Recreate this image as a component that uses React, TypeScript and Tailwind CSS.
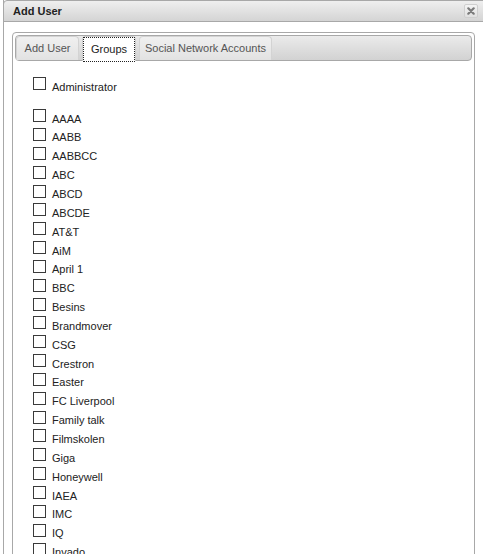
import React from "react";

const groups = [
  "AAAA","AABB","AABBCC","ABC","ABCD","ABCDE","AT&T","AiM","April 1","BBC","Besins","Brandmover","CSG","Crestron","Easter","FC Liverpool","Family talk","Filmskolen","Giga","Honeywell","IAEA","IMC","IQ","Invado",
];

function Row({ label }: { label: string }) {
  return (
    <div className="flex items-start h-[18.85px]">
      <div className="w-[13px] h-[13px] border border-[#3a3a3a] bg-white shrink-0" />
      <span className="ml-[6px] mt-[3.5px] leading-[13px] text-[11px] text-[#222] whitespace-nowrap">{label}</span>
    </div>
  );
}

export default function App() {
  return (
    <div
      className="w-[483px] h-[554px] overflow-hidden bg-white relative"
      style={{ fontFamily: '"Liberation Sans", Arial, sans-serif' }}
    >
      <div className="ml-[3px] w-[490px] h-[554px] border-l border-[#a8a8a8]">
        <div className="h-[22px] -ml-px border border-[#a8a8a8] rounded-tl-[4px] bg-gradient-to-b from-[#efefef] to-[#d4d4d4] flex items-center relative">
          <span className="ml-[9px] text-[11px] font-bold text-[#222]">Add User</span>
          <div className="absolute left-[460px] top-[3px] w-[14px] h-[14px] rounded-[2px] border border-[#cfcfcf] bg-gradient-to-b from-[#f4f4f4] to-[#e0e0e0] flex items-center justify-center">
            <svg width="8" height="8" viewBox="0 0 8 8">
              <path d="M1.3 1.3 L6.7 6.7 M6.7 1.3 L1.3 6.7" stroke="#7a7a7a" strokeWidth="2.2" strokeLinecap="round" />
            </svg>
          </div>
        </div>
        <div className="pl-[8px] pt-[10px]">
          <div className="w-[463px] h-[540px] border border-[#a8a8a8] rounded-[4px] p-[2px]">
            <div className="h-[26px] border border-[#a8a8a8] rounded-[4px] bg-gradient-to-b from-[#ebebeb] to-[#d2d2d2] flex items-end gap-[3px] pl-0">
              <div className="w-[63px] h-[24px] rounded-t-[4px] border border-b-0 border-[#d3d3d3] bg-gradient-to-b from-[#f0f0f0] to-[#e2e2e2] flex items-center justify-center text-[11px] text-[#555]">
                Add User
              </div>
              <div className="w-[54px] h-[25px] -mb-px rounded-t-[4px] bg-white border border-b-0 border-[#ccc] flex items-center justify-center">
                <div className="w-[54px] h-[25px] border border-dotted border-[#222] flex items-center justify-center text-[11px] text-[#222]">
                  Groups
                </div>
              </div>
              <div className="w-[133px] h-[24px] rounded-t-[4px] border border-b-0 border-[#d3d3d3] bg-gradient-to-b from-[#f0f0f0] to-[#e2e2e2] flex items-center justify-center text-[11px] text-[#555]">
                Social Network Accounts
              </div>
            </div>
            <div className="pl-[18px] pt-[16px]">
              <Row label="Administrator" />
              <div className="h-[13.3px]" />
              {groups.map((g) => (
                <Row key={g} label={g} />
              ))}
            </div>
          </div>
        </div>
      </div>
    </div>
  );
}
